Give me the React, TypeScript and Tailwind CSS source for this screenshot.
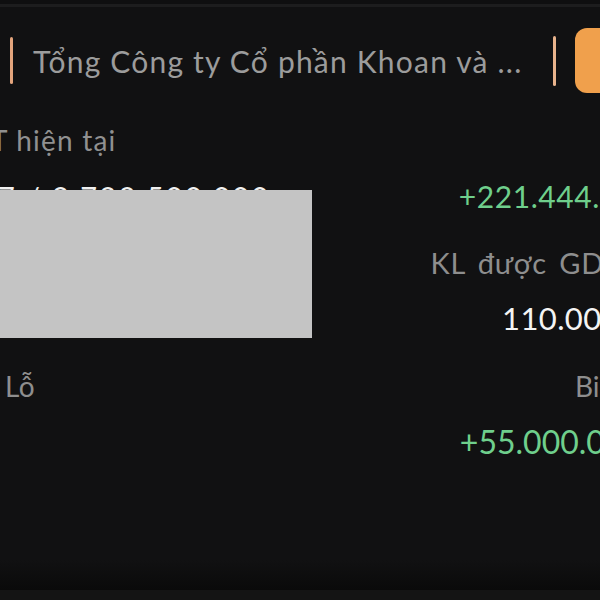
import React from "react";

export default function App() {
  const font = { fontFamily: "Lato, 'Noto Sans', sans-serif" };
  return (
    <div className="relative w-[600px] h-[600px] overflow-hidden bg-[#111112]" style={font}>
      <div className="h-[4px] bg-[#0f0f10]" />
      <div className="h-[3px] bg-[#1d1d1e]" />
      {/* header */}
      <div className="flex items-center mt-[21px] h-[65px]">
        <div className="ml-[10px] w-[3px] h-[47px] rounded-full bg-[#e3a47c]" />
        <div className="ml-[20px] text-[30px] leading-none tracking-[1.2px] text-[#9c9c9c] whitespace-nowrap">
          Tổng Công ty Cổ phần Khoan và ...
        </div>
        <div className="ml-auto w-[3px] h-[50px] rounded-full bg-[#e8b38c]" />
        <div className="ml-[19px] mr-[-40px] w-[65px] h-[65px] rounded-[12px] bg-[#f0a04c]" />
      </div>

      {/* body */}
      <div className="mt-[30px] flex flex-col">
        <div className="ml-[-9px] text-[28px] leading-[34px] tracking-[1.2px] text-[#909090] whitespace-nowrap">T hiện tại</div>
        <div className="mt-[22px] flex items-baseline justify-between whitespace-nowrap">
          <div className="ml-[-2px] text-[29px] leading-[34px] tracking-[2.3px] text-[#f0f0f0]">7 / 2.723.500.000</div>
          <div className="mr-[-54px] text-[30px] leading-[34px] tracking-[0.6px] text-[#6fcf8c]">+221.444.000</div>
        </div>
        <div className="mt-[32px] flex justify-end whitespace-nowrap">
          <div className="mr-[-4px] text-[29px] leading-[34px] tracking-[0.8px] [word-spacing:4px] text-[#8e8e8e]">KL được GD</div>
        </div>
        <div className="mt-[20px] flex justify-end whitespace-nowrap">
          <div className="mr-[-20px] text-[31px] leading-[36px] tracking-[0.4px] text-[#f4f4f4]">110.000</div>
        </div>
        <div className="mt-[33px] flex items-baseline justify-between whitespace-nowrap">
          <div className="ml-[5px] text-[28px] leading-[34px] tracking-[0.5px] text-[#8e8e8e]">Lỗ</div>
          <div className="mr-[-30px] text-[28px] leading-[34px] text-[#8e8e8e]">Biên</div>
        </div>
        <div className="mt-[21px] flex justify-end whitespace-nowrap">
          <div className="mr-[-42px] text-[32px] leading-[36px] text-[#6fcf8c]">+55.000.000</div>
        </div>
      </div>

      {/* bottom fade */}
      <div className="absolute left-0 right-0 bottom-[10px] h-[30px] bg-gradient-to-b from-[#111112] to-[#0a0a0a]" />
      <div className="absolute left-0 right-0 bottom-0 h-[10px] bg-[#141414]" />

      {/* redaction */}
      <div className="absolute left-0 top-[190px] w-[312px] h-[148px] bg-[#c4c4c4]" />
    </div>
  );
}
